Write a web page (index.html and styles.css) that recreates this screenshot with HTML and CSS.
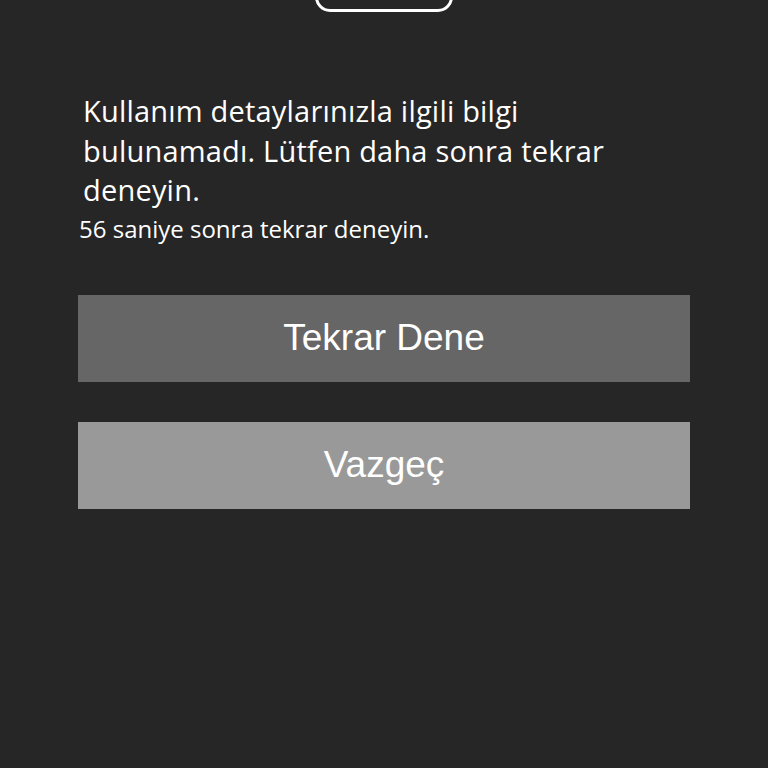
FILE: index.html
```html
<!DOCTYPE html>
<html lang="tr">
<head>
  <meta charset="UTF-8" />
  <meta name="viewport" content="width=device-width, initial-scale=1.0"/>
  <title>Kullanım Detayları</title>
  <link rel="stylesheet" href="styles.css">
</head>
<body>

  <!-- Üstteki simge kutusu (ekranın dışına taşıyor) -->
  <div class="icon-frame"></div>

  <!-- Hata mesajı -->
  <div class="message">
    <p class="message-text">Kullanım detaylarınızla ilgili bilgi bulunamadı. Lütfen daha sonra tekrar deneyin.</p>
    <p class="countdown"><span id="seconds">56</span> saniye sonra tekrar deneyin.</p>
  </div>

  <!-- Butonlar -->
  <div class="actions">
    <button class="btn btn-retry">Tekrar Dene</button>
    <button class="btn btn-cancel">Vazgeç</button>
  </div>

</body>
</html>
```

FILE: styles.css
```css
/* Genel sıfırlama */
* {
  margin: 0;
  padding: 0;
  box-sizing: border-box;
}

body {
  background-color: #262626;
  font-family: "Open Sans", sans-serif;
  color: #fff;
  height: 768px;
  overflow: hidden;
}

/* Üstteki yuvarlatılmış çerçeve */
.icon-frame {
  width: 138px;
  height: 60px;
  margin: -48px auto 0;
  border: 3.5px solid #fff;
  border-radius: 15px;
}

/* Mesaj bloğu */
.message {
  padding: 79px 0 0 79px;
}

.message-text {
  width: 530px;
  padding-left: 4px;
  font-size: 29px;
  line-height: 39.5px;
  letter-spacing: 0.2px;
}

.countdown {
  margin-top: 3px;
  font-size: 24px;
  line-height: 32px;
}

/* Buton alanı */
.actions {
  display: flex;
  flex-direction: column;
  gap: 40px;
  padding: 50px 78px 0 78px;
}

.btn {
  height: 87px;
  border: none;
  color: #fff;
  font-family: "Liberation Sans", Arial, sans-serif;
  font-size: 37px;
  cursor: pointer;
}

.btn-retry {
  background-color: #666;
}

.btn-cancel {
  background-color: #999;
}
```
